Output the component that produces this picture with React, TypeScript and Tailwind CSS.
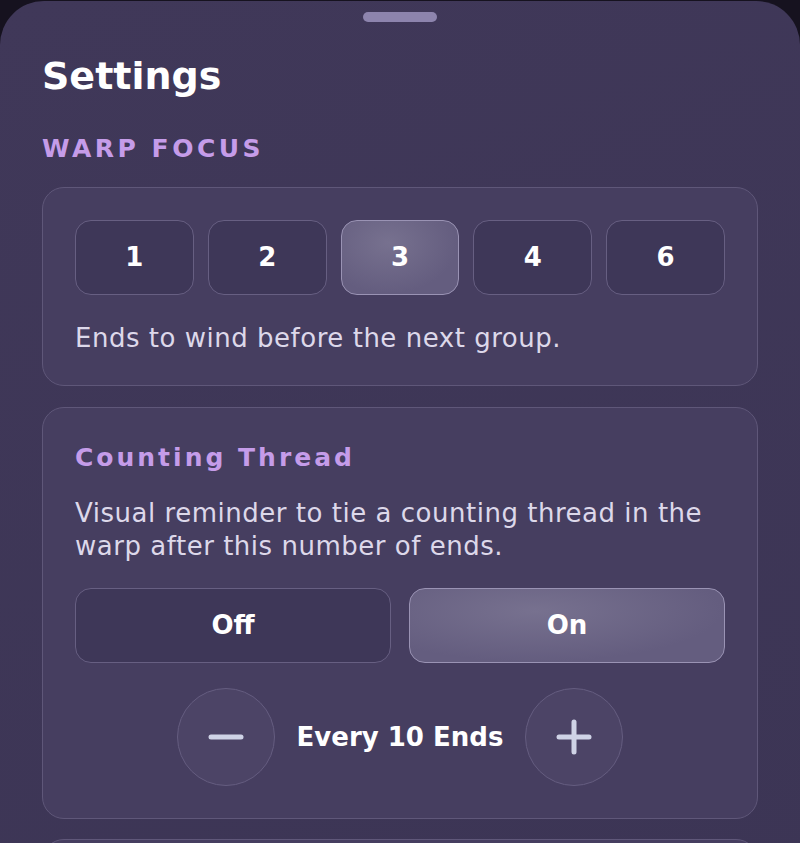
const font = { fontFamily: '"DejaVu Sans", "Open Sans", sans-serif' };

const counts = [1, 2, 3, 4, 6];

function Segment({ label, active, className = "" }: { label: string; active?: boolean; className?: string }) {
  return (
    <button
      type="button"
      className={
        "flex h-[75px] items-center justify-center rounded-[16px] border text-[26px] font-bold text-white " +
        (active
          ? "border-[#9a93b4] bg-[radial-gradient(ellipse_at_40%_30%,#77718f_0%,#645d7f_70%)] "
          : "border-[#675f82] bg-[#3e3758] ") +
        className
      }
    >
      {label}
    </button>
  );
}

function RoundButton({ children }: { children: React.ReactNode }) {
  return (
    <button
      type="button"
      className="flex h-[98px] w-[98px] items-center justify-center rounded-full border border-[#655d80] bg-[#4c4466]"
    >
      {children}
    </button>
  );
}

export default function App() {
  return (
    <div className="h-[843px] w-[800px] overflow-hidden bg-[#16121f] pt-px" style={font}>
      <div className="h-[900px] rounded-t-[44px] bg-[linear-gradient(160deg,#403859_0%,#3c3555_100%)] px-[42px] pt-[11px]">
        <div className="mx-auto h-[10px] w-[74px] rounded-full bg-[#8d84ad]" />

        <h1 className="mt-[30px] text-[38px] font-bold leading-[48px] text-white">Settings</h1>

        <div className="mt-[33px] text-[25px] font-bold uppercase leading-[32px] tracking-[0.14em] text-[#c59ce9]">
          Warp Focus
        </div>

        <section className="mt-[22px] rounded-[22px] border border-[#5f5779] bg-[#463e60] px-[32px] pb-[30px] pt-[32px]">
          <div className="flex gap-[14px]">
            {counts.map((n) => (
              <Segment key={n} label={String(n)} active={n === 3} className="flex-1" />
            ))}
          </div>
          <p className="mt-[26px] text-[26px] leading-[34px] tracking-[0.02em] text-[#ddd8ea]">
            Ends to wind before the next group.
          </p>
        </section>

        <section className="mt-[21px] rounded-[22px] border border-[#5f5779] bg-[#463e60] px-[32px] pb-[32px] pt-[34px]">
          <div className="text-[25px] font-bold leading-[32px] tracking-[0.12em] text-[#c59ce9]">Counting Thread</div>
          <p className="mt-[23px] text-[26px] leading-[33px] tracking-[0.02em] text-[#ddd8ea]">
            Visual reminder to tie a counting thread in the warp after this number of ends.
          </p>
          <div className="mt-[25px] flex gap-[18px]">
            <Segment label="Off" className="flex-1" />
            <Segment label="On" active className="flex-1" />
          </div>
          <div className="mt-[25px] flex items-center justify-center gap-[22px]">
            <RoundButton>
              <svg width="36" height="36" viewBox="0 0 36 36">
                <line x1="3" y1="18" x2="33" y2="18" stroke="#cfd3e6" strokeWidth="5" strokeLinecap="round" />
              </svg>
            </RoundButton>
            <span className="text-[26px] font-bold text-white">Every 10 Ends</span>
            <RoundButton>
              <svg width="36" height="36" viewBox="0 0 36 36">
                <line x1="3" y1="18" x2="33" y2="18" stroke="#cfd3e6" strokeWidth="5" strokeLinecap="round" />
                <line x1="18" y1="3" x2="18" y2="33" stroke="#cfd3e6" strokeWidth="5" strokeLinecap="round" />
              </svg>
            </RoundButton>
          </div>
        </section>

        <section className="mt-[20px] h-[200px] rounded-[22px] border border-[#5f5779] bg-[#463e60]" />
      </div>
    </div>
  );
}
